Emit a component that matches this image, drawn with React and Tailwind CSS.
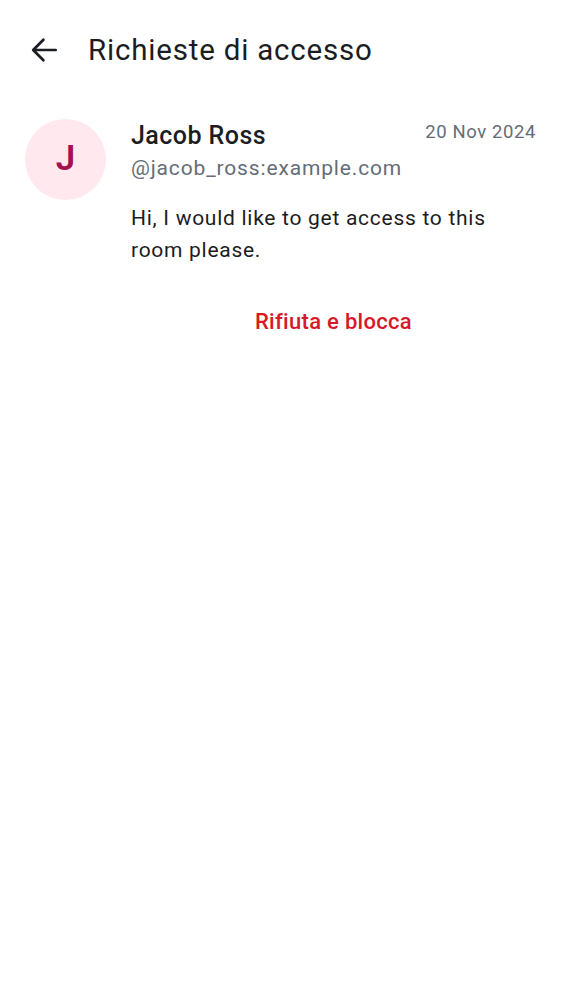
import React from "react";

const BackArrow = () => (
    <svg width="36" height="36" viewBox="0 0 24 24" fill="none">
        <path
            d="M19.8 12H5.2M11.6 5.2L4.8 12l6.8 6.8"
            stroke="#1b1d22"
            strokeWidth="1.8"
            strokeLinecap="round"
            strokeLinejoin="round"
        />
    </svg>
);

const App = () => {
    return (
        <div
            className="w-[562px] h-[1000px] bg-white text-[#1b1d22]"
            style={{ fontFamily: "Roboto, 'Liberation Sans', sans-serif" }}
        >
            {/* Top bar */}
            <div className="flex items-center h-[100px] pl-[26px]">
                <BackArrow />
                <h1 className="ml-[26px] text-[29.5px] leading-[36px] tracking-[0.8px] text-[#1b1d22]">
                    Richieste di accesso
                </h1>
            </div>

            {/* Request */}
            <div className="flex pl-[25px] pr-[26px] pt-[19px]">
                <div className="w-[81px] h-[81px] rounded-full bg-[#ffe9ee] flex items-center justify-center shrink-0">
                    <span className="text-[35px] font-semibold text-[#a3124f]">J</span>
                </div>
                <div className="ml-[25px] flex-grow">
                    <div className="flex justify-between items-start">
                        <p className="text-[25px] font-medium leading-[33px] tracking-[0.45px]">
                            Jacob Ross
                        </p>
                        <p className="text-[18.5px] leading-[26px] text-[#656d77] tracking-[0.6px]">
                            20 Nov 2024
                        </p>
                    </div>
                    <p className="text-[21px] leading-[33px] text-[#656d77] tracking-[0.85px]">
                        @jacob_ross:example.com
                    </p>
                    <p className="mt-[17px] text-[21px] leading-[32px] tracking-[0.72px]">
                        Hi, I would like to get access to this room please.
                    </p>
                    <div className="flex justify-center mt-[41px]">
                        <button className="text-[22px] font-medium leading-[30px] tracking-[0.3px] text-[#d51928]">
                            Rifiuta e blocca
                        </button>
                    </div>
                </div>
            </div>
        </div>
    );
};

export default App;
